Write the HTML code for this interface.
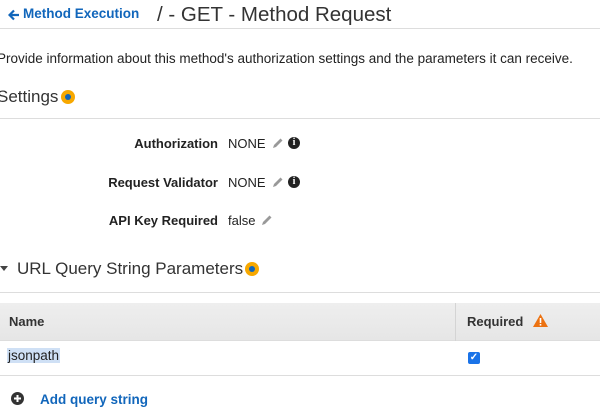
<!DOCTYPE html>
<html><head><style>
*{margin:0;padding:0;box-sizing:border-box}
body{width:600px;height:417px;overflow:hidden;background:#fff;font-family:"Liberation Sans",sans-serif;color:#222;position:relative}
.a{position:absolute;white-space:nowrap}
.dot{position:absolute;width:14px;height:14px;border-radius:50%;background:#f7a800;}
.dot::after{content:"";position:absolute;left:4px;top:4px;width:6px;height:6px;border-radius:50%;background:#1166bb}
.lbl{position:absolute;right:382px;font-weight:bold;font-size:13px;color:#222}
.val{position:absolute;left:228px;font-size:13px;color:#222}
.info{position:absolute;top:2px;width:12px;height:12px;border-radius:50%;background:#222;color:#fff;font-size:10px;font-weight:bold;text-align:center;line-height:12px;font-family:"Liberation Serif",serif}
.pen{display:inline-block;width:12px;height:12px;vertical-align:-1px;margin-left:6px}
</style></head><body>
<svg class="a" style="left:8px;top:9px" width="12" height="12" viewBox="0 0 12 12"><path d="M11 6 H2 M6 1.5 L1.5 6 L6 10.5" stroke="#1166bb" stroke-width="2.2" fill="none"/></svg>
<div class="a" style="left:23px;top:6px;font-size:13.5px;font-weight:bold;color:#1166bb">Method Execution</div>
<div class="a" style="left:157px;top:3px;font-size:20.5px;color:#333">/ - GET - Method Request</div>
<div class="a" style="left:0;top:28px;width:600px;height:1px;background:#ddd"></div>
<div class="a" style="left:-3px;top:51px;font-size:13.5px;color:#222">Provide information about this method's authorization settings and the parameters it can receive.</div>
<div class="a" style="left:-3px;top:87px;font-size:17px;color:#333">Settings</div>
<div class="dot" style="left:61px;top:90px"></div>
<div class="a" style="left:0;top:118px;width:600px;height:1px;background:#ddd"></div>
<div class="lbl" style="top:136px">Authorization</div>
<div class="val" style="top:136px">NONE<svg class="pen" viewBox="0 0 12 12"><path d="M1 11 L2 8 L8.5 1.5 L10.5 3.5 L4 10 Z" fill="#999"/></svg></div>
<div class="info" style="left:288px;top:137px">i</div>
<div class="lbl" style="top:175px">Request Validator</div>
<div class="val" style="top:175px">NONE<svg class="pen" viewBox="0 0 12 12"><path d="M1 11 L2 8 L8.5 1.5 L10.5 3.5 L4 10 Z" fill="#999"/></svg></div>
<div class="info" style="left:288px;top:176px">i</div>
<div class="lbl" style="top:213px">API Key Required</div>
<div class="val" style="top:213px">false<svg class="pen" viewBox="0 0 12 12"><path d="M1 11 L2 8 L8.5 1.5 L10.5 3.5 L4 10 Z" fill="#999"/></svg></div>
<div class="a" style="left:0;top:266px;width:0;height:0;border-left:4px solid transparent;border-right:4px solid transparent;border-top:5px solid #444"></div>
<div class="a" style="left:17px;top:259px;font-size:17px;color:#333">URL Query String Parameters</div>
<div class="dot" style="left:245px;top:262px"></div>
<div class="a" style="left:0;top:292px;width:600px;height:1px;background:#ddd"></div>
<div class="a" style="left:0;top:303px;width:600px;height:38px;background:linear-gradient(#eee,#e6e6e6);border-bottom:1px solid #ddd"></div>
<div class="a" style="left:455px;top:303px;width:1px;height:38px;background:#d4d4d4"></div>
<div class="a" style="left:9px;top:314px;font-size:13px;font-weight:bold;color:#333">Name</div>
<div class="a" style="left:467px;top:314px;font-size:13px;font-weight:bold;color:#333">Required</div>
<svg class="a" style="left:533px;top:314px" width="15" height="13" viewBox="0 0 15 13"><path d="M7.5 0 L15 13 L0 13 Z" fill="#ec7211"/><rect x="6.7" y="4" width="1.6" height="5" fill="#fff"/><rect x="6.7" y="10" width="1.6" height="1.6" fill="#fff"/></svg>
<div class="a" style="left:7px;top:348px;font-size:13.5px;color:#222;background:#cfe0f5;padding:0 1px">jsonpath</div>
<div class="a" style="left:468px;top:352px;width:12px;height:12px;border-radius:2px;background:#1a73e8;color:#fff;font-size:10px;line-height:12px;text-align:center;font-weight:bold">✓</div>
<div class="a" style="left:0;top:375px;width:600px;height:1px;background:#ddd"></div>
<svg class="a" style="left:11px;top:392px" width="13" height="13" viewBox="0 0 13 13"><circle cx="6.5" cy="6.5" r="6.5" fill="#333"/><path d="M6.5 3 V10 M3 6.5 H10" stroke="#fff" stroke-width="2"/></svg>
<div class="a" style="left:40px;top:392px;font-size:13.5px;font-weight:bold;color:#1166bb">Add query string</div>
</body></html>
